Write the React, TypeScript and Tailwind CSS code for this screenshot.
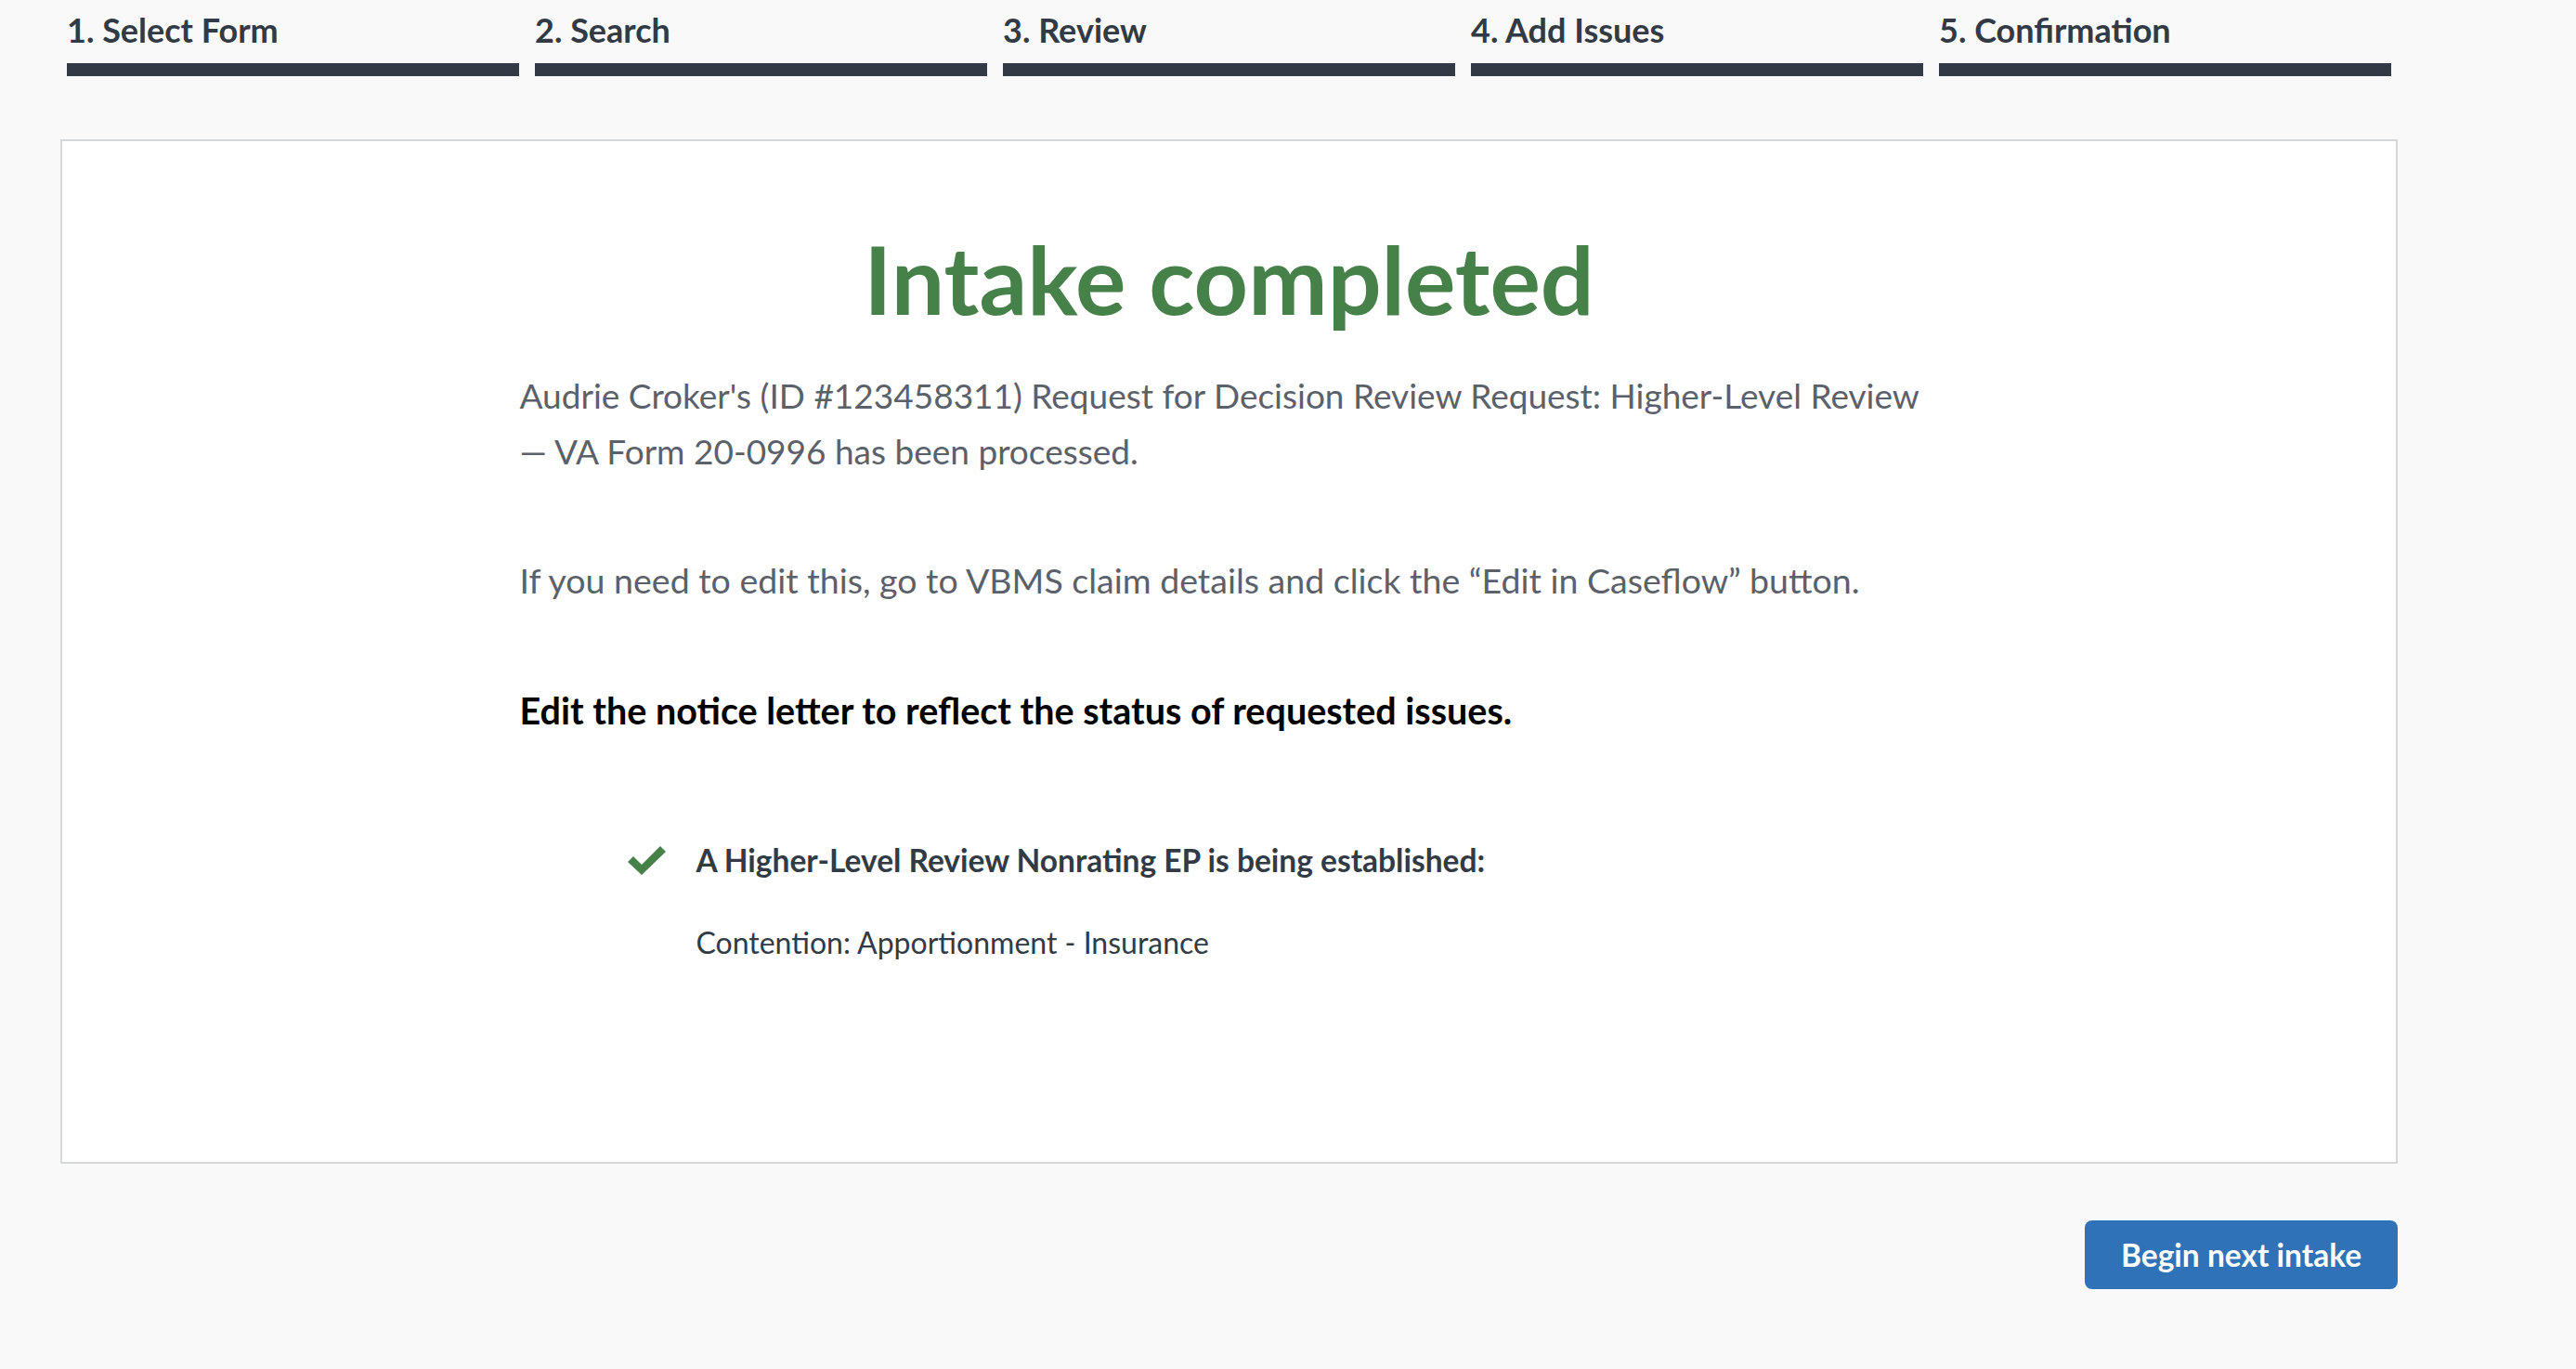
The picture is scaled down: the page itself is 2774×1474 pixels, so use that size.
const steps = ["1. Select Form", "2. Search", "3. Review", "4. Add Issues", "5. Confirmation"];

function GreenCheck() {
  return (
    <svg width="41" height="31" viewBox="0 0 41 31" className="shrink-0" aria-hidden="true">
      <path d="M0 17 L6 11 L15 20 L35 0 L41 6 L15 31 Z" fill="#47814a" />
    </svg>
  );
}

export default function App() {
  return (
    <div className="min-h-screen bg-[#f9f9f9] font-['Lato',sans-serif] text-[#323a45]">
      <div className="ml-[65px] w-[2517px]">
        <ol className="flex gap-[17px] px-[7px]">
          {steps.map((step) => (
            <li key={step} className="flex-1 pt-[12px]">
              <div className="text-[36px] font-bold leading-[40px]">{step}</div>
              <div className="mt-[16px] h-[14px] bg-[#323a45]" />
            </li>
          ))}
        </ol>

        <section className="mt-[68px] h-[1103px] border-2 border-[#d6d7d9] bg-white pt-[91px]">
          <h1 className="text-center text-[102px] font-bold leading-[114px] text-[#47814a]">Intake completed</h1>
          <div className="mx-auto w-[1528px]">
            <p className="mt-[39px] text-[37px] leading-[60px] text-[#5b616b]">
              <span className="block whitespace-nowrap">
                Audrie Croker's (ID #123458311) Request for Decision Review Request: Higher-Level Review
              </span>
              <span className="block whitespace-nowrap">— VA Form 20-0996 has been processed.</span>
            </p>
            <p className="mt-[79px] whitespace-nowrap text-[37.5px] leading-[60px] text-[#5b616b]">
              If you need to edit this, go to VBMS claim details and click the “Edit in Caseflow” button.
            </p>
            <p className="mt-[80px] whitespace-nowrap text-[39.5px] font-bold leading-[60px] text-black">
              Edit the notice letter to reflect the status of requested issues.
            </p>

            <ul className="mt-[109px] pl-[116px]">
              <li>
                <div className="flex items-center gap-[33px]">
                  <GreenCheck />
                  <span className="whitespace-nowrap text-[33.5px] font-bold leading-[45px]">
                    A Higher-Level Review Nonrating EP is being established:
                  </span>
                </div>
                <div className="mt-[45px] pl-[74px] text-[32px] leading-[42px]">
                  Contention: Apportionment - Insurance
                </div>
              </li>
            </ul>
          </div>
        </section>

        <div className="mt-[61px] flex justify-end">
          <button className="h-[74px] w-[337px] rounded-[8px] bg-[#2f72b7] text-[33.5px] font-bold text-white">
            Begin next intake
          </button>
        </div>
      </div>
    </div>
  );
}
